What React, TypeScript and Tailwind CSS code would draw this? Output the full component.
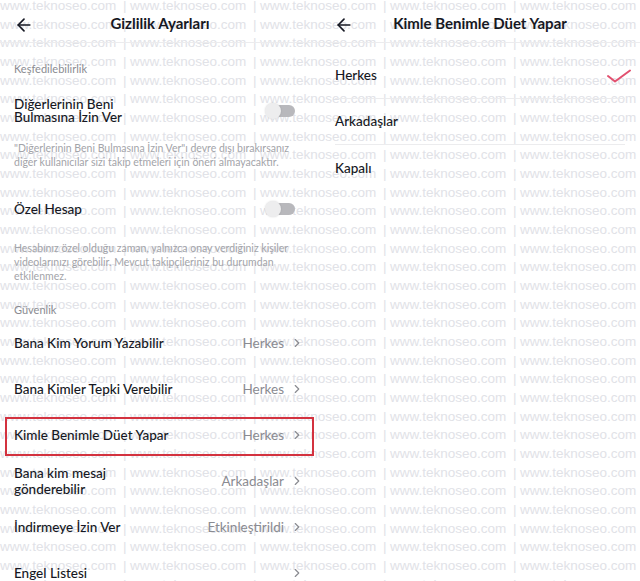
import { ArrowLeft, ChevronRight } from 'lucide-react';

const rows = Array.from({ length: 33 });
const cols = Array.from({ length: 5 });

function Watermark() {
  return (
    <div className="pointer-events-none absolute inset-0 overflow-hidden">
      <div className="-mt-[3px] font-['Liberation_Sans',sans-serif] text-[13.5px] leading-[18.67px] text-[#e1e2e7]">
        {rows.map((_, r) => (
          <div key={r} className="flex whitespace-nowrap">
            {cols.map((_, c) => (
              <span key={c} className="inline-flex w-[130px] shrink-0">
                <span className="w-[123px]">www.teknoseo.com</span>
                <span>|</span>
              </span>
            ))}
          </div>
        ))}
      </div>
    </div>
  );
}

function Header({ title }: { title: string }) {
  return (
    <div className="relative flex h-[43px] items-center justify-center border-b border-[#ececee] pt-[4px]">
      <ArrowLeft className="absolute left-[14px] top-[15px] h-[20px] w-[20px] text-[#161823]" strokeWidth={2} />
      <h1 className="text-[15px] font-bold text-[#161823]">{title}</h1>
    </div>
  );
}

function Toggle() {
  return (
    <div className="relative mr-[25px] h-[12px] w-[28px] rounded-full bg-[#b8b8bc]">
      <div className="absolute -left-[2px] -top-[2px] h-[16px] w-[16px] rounded-full bg-[#ededee] shadow-[0_0_2px_rgba(0,0,0,0.15)]" />
    </div>
  );
}

function LinkRow({ label, value, boxed }: { label: React.ReactNode; value?: string; boxed?: boolean }) {
  return (
    <div className="relative flex h-[46px] items-center justify-between pl-[14px] pr-[16px]">
      <span className="text-[13.5px] font-medium leading-[16px] text-[#161823]">{label}</span>
      <span className="flex items-center gap-[6px] text-[13.5px] text-[#8a8b91]">
        {value}
        <ChevronRight className="h-[14px] w-[14px] text-[#8a8b91]" strokeWidth={2} />
      </span>
      {boxed && (
        <div className="absolute left-[5px] right-[6px] top-[5px] bottom-[2px] border-2 border-[#d3323f]" />
      )}
    </div>
  );
}

function Privacy() {
  return (
    <div className="w-[320px]">
      <Header title="Gizlilik Ayarları" />
      <p className="mt-[18px] pl-[14px] text-[11px] leading-[16px] text-[#8a8b91]">Keşfedilebilirlik</p>
      <div className="mt-[21px] flex items-center justify-between pl-[14px]">
        <span className="text-[13.5px] font-medium leading-[13px] text-[#161823]">
          Diğerlerinin Beni
          <br />
          Bulmasına İzin Ver
        </span>
        <Toggle />
      </div>
      <p className="mt-[17px] pl-[14px] text-[10.5px] leading-[14px] text-[#a3a4a9]">
        "Diğerlerinin Beni Bulmasına İzin Ver"ı devre dışı bırakırsanız
        <br />
        diğer kullanıcılar sizi takip etmeleri için öneri almayacaktır.
      </p>
      <div className="mt-[32px] flex h-[16px] items-center justify-between pl-[14px]">
        <span className="text-[13.5px] font-medium text-[#161823]">Özel Hesap</span>
        <Toggle />
      </div>
      <p className="mt-[24px] pl-[14px] text-[10.5px] leading-[14px] text-[#a3a4a9]">
        Hesabınız özel olduğu zaman, yalnızca onay verdiğiniz kişiler
        <br />
        videolarınızı görebilir. Mevcut takipçileriniz bu durumdan
        <br />
        etkilenmez.
      </p>
      <p className="mt-[19px] pl-[14px] text-[11px] leading-[16px] text-[#8a8b91]">Güvenlik</p>
      <div className="mt-[2px]">
        <LinkRow label="Bana Kim Yorum Yazabilir" value="Herkes" />
        <LinkRow label="Bana Kimler Tepki Verebilir" value="Herkes" />
        <LinkRow label="Kimle Benimle Düet Yapar" value="Herkes" boxed />
        <LinkRow
          label={
            <>
              Bana kim mesaj
              <br />
              gönderebilir
            </>
          }
          value="Arkadaşlar"
        />
        <LinkRow label="İndirmeye İzin Ver" value="Etkinleştirildi" />
        <LinkRow label="Engel Listesi" />
      </div>
    </div>
  );
}

function Duet() {
  const options = ['Herkes', 'Arkadaşlar', 'Kapalı'];
  return (
    <div className="w-[320px]">
      <Header title="Kimle Benimle Düet Yapar" />
      <div className="mt-[10px] px-[15px]">
        {options.map((o, i) => (
          <div
            key={o}
            className={`flex h-[46px] items-center justify-between ${i < 2 ? 'border-b border-[#ececee]' : ''}`}
          >
            <span className="text-[13.5px] font-medium text-[#161823]">{o}</span>
            {i === 0 && (
              <svg width="26" height="14" viewBox="0 0 26 14" className="mr-[-7px]">
                <polyline points="2,7 9,12.5 24,1.5" fill="none" stroke="#e2506f" strokeWidth="2" strokeLinecap="round" strokeLinejoin="round" />
              </svg>
            )}
          </div>
        ))}
      </div>
    </div>
  );
}

export default function App() {
  return (
    <div className="relative h-[581px] w-[640px] overflow-hidden bg-white font-['Lato',sans-serif]">
      <Watermark />
      <div className="relative flex">
        <Privacy />
        <Duet />
      </div>
    </div>
  );
}
